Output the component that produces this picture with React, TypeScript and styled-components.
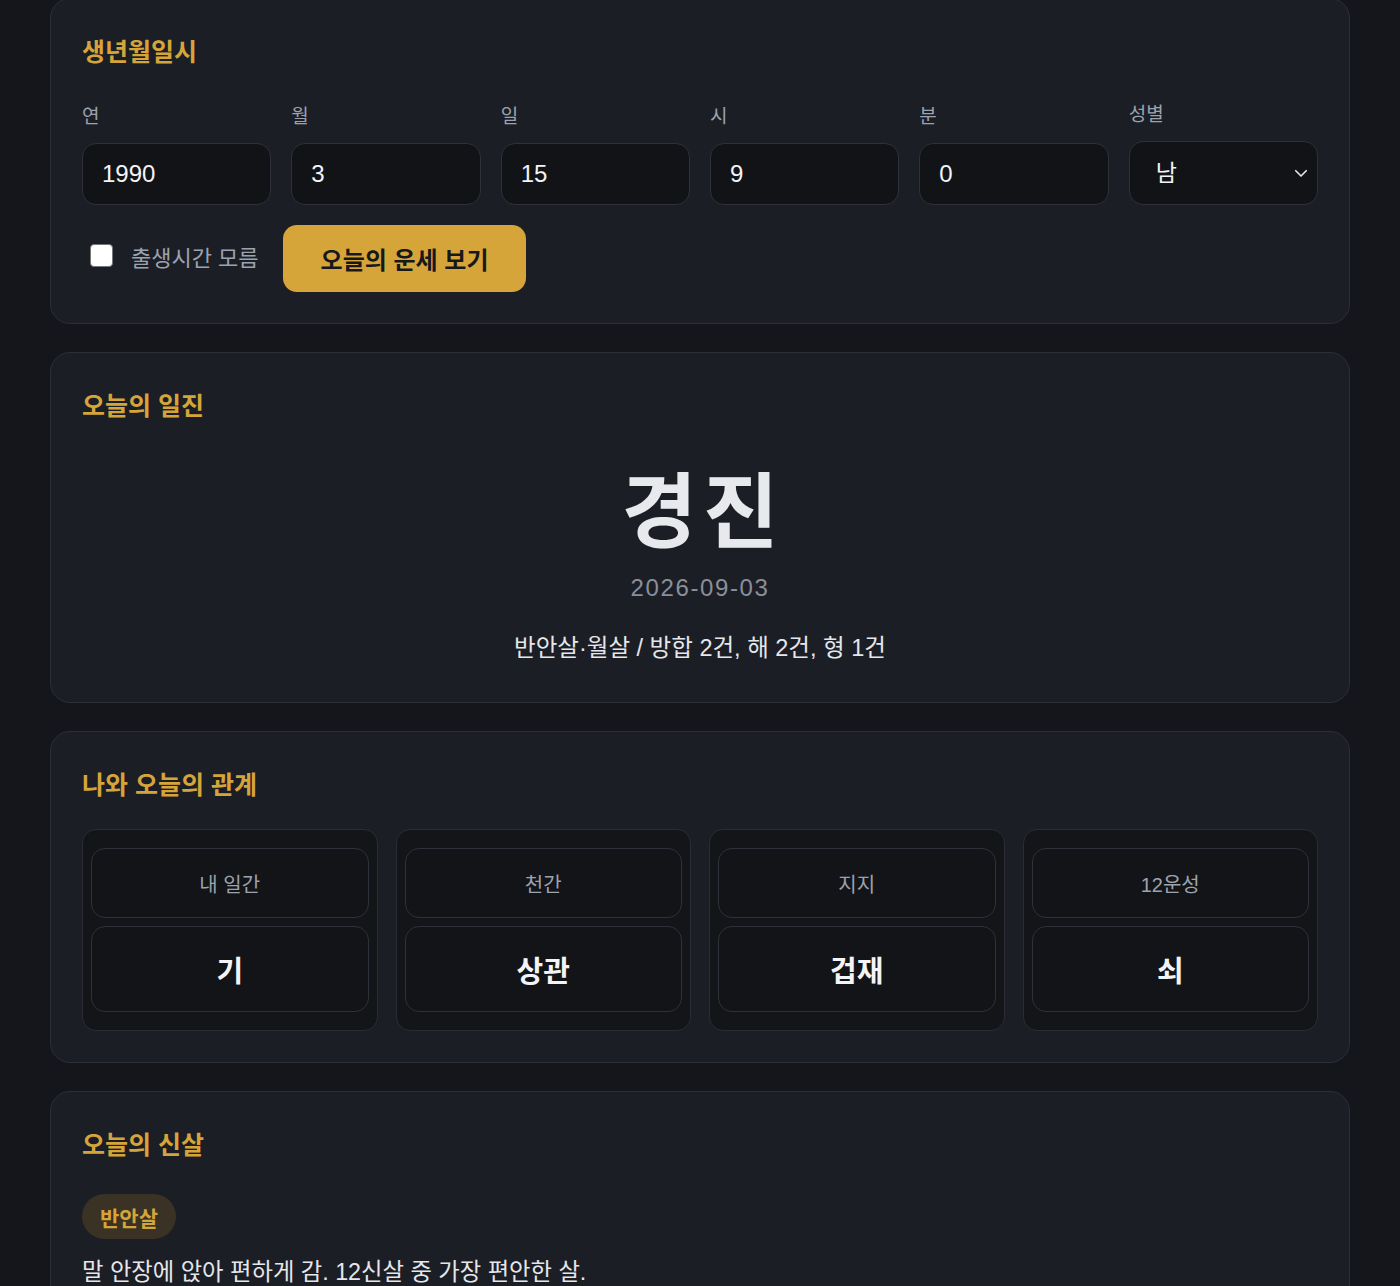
import React, { useState } from "react";
import styled, { createGlobalStyle } from "styled-components";

const GlobalStyle = createGlobalStyle`
    * {
        box-sizing: border-box;
    }
    body {
        margin: 0;
        background: #15161b;
        font-family: "Liberation Sans", "Noto Sans CJK KR", sans-serif;
        color: #e5e7eb;
    }
`;

const Page = styled.div`
    max-width: 1300px;
    margin: -2px auto 0;
    display: flex;
    flex-direction: column;
    gap: 28px;
    padding-bottom: 40px;
`;

const Card = styled.section<{ $bottom?: number }>`
    background: #1c1e26;
    border: 1px solid #2c2f38;
    border-radius: 20px;
    padding: 31px 31px ${(p) => p.$bottom ?? 31}px;
`;

const CardTitle = styled.h2<{ $gap: number }>`
    margin: 0 0 ${(p) => p.$gap}px;
    padding-top: 2px;
    height: 40px;
    font-size: 25px;
    line-height: 40px;
    font-weight: 700;
    color: #d6a53a;
`;

const FieldGrid = styled.div`
    display: grid;
    grid-template-columns: repeat(6, 1fr);
    gap: 20px;
    align-items: end;
`;

const Field = styled.label`
    display: flex;
    flex-direction: column;
`;

const FieldLabel = styled.span`
    font-size: 19px;
    line-height: 28px;
    color: #9ca3af;
    margin-bottom: 12px;
`;

const TextInput = styled.input`
    height: 62px;
    width: 100%;
    background: #121317;
    border: 1px solid #2e313a;
    border-radius: 14px;
    padding: 0 19px;
    font-family: inherit;
    font-size: 24px;
    color: #f3f4f6;
    outline: none;
`;

const SelectWrap = styled.div`
    position: relative;
`;

const Select = styled.select`
    height: 64px;
    width: 100%;
    appearance: none;
    background: #121317;
    border: 1px solid #2e313a;
    border-radius: 14px;
    padding: 0 26px;
    font-family: inherit;
    font-size: 23px;
    color: #f3f4f6;
    outline: none;
`;

const Chevron = styled.svg`
    position: absolute;
    right: 8px;
    top: 50%;
    transform: translateY(-50%);
    pointer-events: none;
`;

const ActionRow = styled.div`
    display: flex;
    align-items: center;
    margin-top: 20px;
    padding-left: 8px;
`;

const CheckLabel = styled.label`
    display: flex;
    align-items: center;
    gap: 18px;
    font-size: 22px;
    color: #9ca3af;
    margin: 0 24px 6px 0;
`;

const CheckBox = styled.input`
    appearance: none;
    width: 23px;
    height: 23px;
    margin: 0;
    background: #ffffff;
    border: 1px solid #767676;
    border-radius: 4px;
`;

const PrimaryButton = styled.button`
    height: 67px;
    padding: 0 38px;
    border: none;
    border-radius: 14px;
    background: #d6a53a;
    color: #17181c;
    font-family: inherit;
    font-size: 24px;
    font-weight: 700;
    cursor: pointer;
`;

const Centered = styled.div`
    display: flex;
    flex-direction: column;
    align-items: center;
`;

const Ganji = styled.div`
    margin-top: 41px;
    padding-left: 6px;
    font-size: 82px;
    line-height: 96px;
    font-weight: 700;
    letter-spacing: 6px;
    color: #e8e9ed;
`;

const DateText = styled.div`
    margin-top: 11px;
    font-size: 24px;
    line-height: 32px;
    letter-spacing: 1.6px;
    color: #8b8f99;
`;

const Summary = styled.div`
    margin-top: 28px;
    font-size: 23.5px;
    line-height: 32px;
    color: #e5e7eb;
`;

const RelationGrid = styled.div`
    display: grid;
    grid-template-columns: repeat(4, 1fr);
    gap: 18px;
`;

const RelationBox = styled.div`
    display: flex;
    flex-direction: column;
    gap: 8px;
    padding: 18px 8px;
    background: #141519;
    border: 1px solid #2a2d35;
    border-radius: 14px;
`;

const RelationCell = styled.div<{ $value?: boolean }>`
    height: ${(p) => (p.$value ? 86 : 70)}px;
    display: flex;
    align-items: center;
    justify-content: center;
    background: #131418;
    border: 1px solid #2e313a;
    border-radius: 14px;
    font-size: ${(p) => (p.$value ? 29 : 20)}px;
    font-weight: ${(p) => (p.$value ? 700 : 400)};
    color: ${(p) => (p.$value ? "#f3f4f6" : "#9ca3af")};
`;

const Badge = styled.span`
    display: inline-flex;
    align-items: center;
    height: 45px;
    padding: 0 18px;
    border-radius: 23px;
    background: #3a3224;
    color: #d6a53a;
    font-size: 21px;
    font-weight: 700;
`;

const Description = styled.p`
    margin: 17px 0 0;
    font-size: 23.3px;
    line-height: 32px;
    color: #e5e7eb;
`;

const fields = [
    { label: "연", value: "1990" },
    { label: "월", value: "3" },
    { label: "일", value: "15" },
    { label: "시", value: "9" },
    { label: "분", value: "0" },
];

const relations = [
    { label: "내 일간", value: "기" },
    { label: "천간", value: "상관" },
    { label: "지지", value: "겁재" },
    { label: "12운성", value: "쇠" },
];

const App = () => {
    const [values, setValues] = useState(fields.map((f) => f.value));
    const [gender, setGender] = useState("남");
    const [unknownTime, setUnknownTime] = useState(false);

    return (
        <>
            <GlobalStyle />
            <Page>
                <Card>
                    <CardTitle $gap={31}>생년월일시</CardTitle>
                    <FieldGrid>
                        {fields.map((field, i) => (
                            <Field key={field.label}>
                                <FieldLabel>{field.label}</FieldLabel>
                                <TextInput
                                    type="text"
                                    value={values[i]}
                                    onChange={(e) => {
                                        const next = [...values];
                                        next[i] = e.target.value;
                                        setValues(next);
                                    }}
                                />
                            </Field>
                        ))}
                        <Field>
                            <FieldLabel>성별</FieldLabel>
                            <SelectWrap>
                                <Select
                                    value={gender}
                                    onChange={(e) => setGender(e.target.value)}
                                >
                                    <option value="남">남</option>
                                    <option value="여">여</option>
                                </Select>
                                <Chevron
                                    width="18"
                                    height="18"
                                    viewBox="0 0 24 24"
                                    fill="none"
                                    stroke="#e5e7eb"
                                    strokeWidth="2.2"
                                    strokeLinecap="round"
                                    strokeLinejoin="round"
                                >
                                    <path d="M5 9l7 7 7-7" />
                                </Chevron>
                            </SelectWrap>
                        </Field>
                    </FieldGrid>
                    <ActionRow>
                        <CheckLabel>
                            <CheckBox
                                type="checkbox"
                                checked={unknownTime}
                                onChange={(e) => setUnknownTime(e.target.checked)}
                            />
                            출생시간 모름
                        </CheckLabel>
                        <PrimaryButton>오늘의 운세 보기</PrimaryButton>
                    </ActionRow>
                </Card>

                <Card $bottom={38}>
                    <CardTitle $gap={0}>오늘의 일진</CardTitle>
                    <Centered>
                        <Ganji>경진</Ganji>
                        <DateText>2026-09-03</DateText>
                        <Summary>반안살·월살 / 방합 2건, 해 2건, 형 1건</Summary>
                    </Centered>
                </Card>

                <Card>
                    <CardTitle $gap={26}>나와 오늘의 관계</CardTitle>
                    <RelationGrid>
                        {relations.map((rel) => (
                            <RelationBox key={rel.label}>
                                <RelationCell>{rel.label}</RelationCell>
                                <RelationCell $value>{rel.value}</RelationCell>
                            </RelationBox>
                        ))}
                    </RelationGrid>
                </Card>

                <Card>
                    <CardTitle $gap={31}>오늘의 신살</CardTitle>
                    <Badge>반안살</Badge>
                    <Description>
                        말 안장에 앉아 편하게 감. 12신살 중 가장 편안한 살.
                    </Description>
                </Card>
            </Page>
        </>
    );
};

export default App;
